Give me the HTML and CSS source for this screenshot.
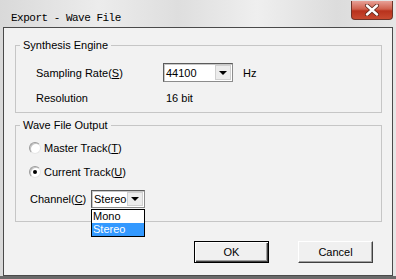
FILE: index.html
```html
<!DOCTYPE html>
<html>
<head lang="en">
    <meta charset="UTF-8">
    <title>Export - Wave File</title>
    <link rel="stylesheet" href="styles.css">
</head>
<body>
<div class="window">
    <div class="titlebar">
        <span class="title">Export - Wave File</span>
        <span class="close">
            <svg width="16" height="12" viewBox="0 0 16 12">
                <path d="M3 1.5 L13 10.5 M13 1.5 L3 10.5" stroke="#5a2418" stroke-width="4" stroke-linecap="round" fill="none"/>
                <path d="M3 1.5 L13 10.5 M13 1.5 L3 10.5" stroke="#fff" stroke-width="2.4" stroke-linecap="round" fill="none"/>
            </svg>
        </span>
    </div>
    <div class="client">
        <fieldset class="group">
            <legend>Synthesis Engine</legend>
            <div class="group-body engine">
                <div class="row">
                    <span class="label">Sampling Rate(<u>S</u>)</span>
                    <div class="combo rate">
                        <span class="value">44100</span>
                        <span class="drop"><i></i></span>
                    </div>
                    <span class="unit">Hz</span>
                </div>
                <div class="row second">
                    <span class="label">Resolution</span>
                    <span class="plain">16 bit</span>
                </div>
            </div>
        </fieldset>
        <fieldset class="group output">
            <legend>Wave File Output</legend>
            <div class="group-body">
                <div class="radio"><span class="dot"></span>Master Track(<u>T</u>)</div>
                <div class="radio checked"><span class="dot"></span>Current Track(<u>U</u>)</div>
                <div class="row channel">
                    <span class="label">Channel(<u>C</u>)</span>
                    <div class="combo stereo">
                        <span class="value">Stereo</span>
                        <span class="drop"><i></i></span>
                        <div class="list">
                            <div class="item">Mono</div>
                            <div class="item selected">Stereo</div>
                        </div>
                    </div>
                </div>
            </div>
        </fieldset>
        <div class="buttons">
            <div class="btn default">OK</div>
            <div class="btn">Cancel</div>
        </div>
    </div>
</div>
</body>
</html>
```

FILE: styles.css
```css
*{
    padding: 0;
    margin: 0;
    box-sizing: border-box;
}
body{
    background: #7a7a7a;
    font-family: "Liberation Sans", Arial, sans-serif;
    font-size: 11px;
    color: #000;
}
.window{
    width: 396px;
    height: 279px;
    display: flex;
    flex-direction: column;
    padding: 0 3px;
    background: linear-gradient(90deg, #d9d9d9, #ececec 25%, #dedede 45%, #efefef 65%, #dcdcdc 85%, #e6e6e6);
    border-bottom: 3px solid #6a6a6a;
}
.titlebar{
    height: 27px;
    display: flex;
    justify-content: space-between;
    align-items: flex-start;
}
.title{
    font-family: "Liberation Mono", "Courier New", monospace;
    font-size: 11px;
    letter-spacing: -0.5px;
    color: #000;
    padding: 12px 0 0 8px;
    line-height: 12px;
}
.close{
    width: 42px;
    height: 19px;
    margin-top: 1px;
    display: flex;
    align-items: center;
    justify-content: center;
    border: 1px solid #6e3328;
    border-top: none;
    border-radius: 0 0 4px 4px;
    background: linear-gradient(#e7a096, #d0604c 45%, #b8321d 55%, #c84a30);
}
.client{
    flex: 1;
    background: #f2f2f2;
    border: 1px solid #4a4a4a;
}
.group{
    border: 1px solid #c6c6c6;
    margin: 11px 10px 0 11px;
    min-inline-size: 0;
}
.group.output{
    margin-top: 6px;
}
.group legend{
    margin-left: 4px;
    padding: 0 3px;
    line-height: 12px;
}
.group-body{
    padding: 10px 0 13px 13px;
}
.group-body.engine{
    padding: 12px 0 7px 20px;
}
.row{
    display: flex;
    align-items: center;
}
.row.second{
    margin-top: 10px;
    line-height: 13px;
}
.engine .label{
    width: 127px;
}
.plain{
    padding-left: 3px;
}
.unit{
    margin-left: 10px;
}
.combo{
    position: relative;
    height: 19px;
    display: flex;
    align-items: center;
    background: #fff;
    border: 1px solid #8c8c8c;
    border-top-color: #5c5c5c;
    border-left-color: #5c5c5c;
    box-shadow: inset 1px 1px 0 #c8c8c8;
}
.combo.rate{
    width: 70px;
}
.combo .value{
    flex: 1;
    padding-left: 2px;
}
.drop{
    width: 16px;
    height: 15px;
    margin-right: 1px;
    background: #ececec;
    border: 1px solid #d0d0d0;
    display: flex;
    align-items: center;
    justify-content: center;
}
.drop i{
    border-left: 4px solid transparent;
    border-right: 4px solid transparent;
    border-top: 4px solid #000;
}
.radio{
    display: flex;
    align-items: center;
    height: 14px;
}
.radio + .radio{
    margin-top: 10px;
}
.dot{
    width: 12px;
    height: 12px;
    border-radius: 50%;
    margin-right: 3px;
    background: #fff;
    border: 1px solid;
    border-color: #9a9a9a #e6e6e6 #e6e6e6 #9a9a9a;
    box-shadow: inset 1px 1px 0 #c4c4c4;
    display: flex;
    align-items: center;
    justify-content: center;
}
.checked .dot::after{
    content: "";
    width: 4px;
    height: 4px;
    border-radius: 50%;
    background: #000;
}
.row.channel{
    margin-top: 11px;
    padding-left: 1px;
}
.channel .label{
    width: 61px;
}
.combo.stereo{
    width: 54px;
    height: 18px;
}
.combo.stereo .drop{
    height: 14px;
}
.list{
    position: absolute;
    left: -1px;
    top: 18px;
    width: 54px;
    background: #fff;
    border: 1px solid #000;
    line-height: 13px;
}
.item{
    padding-left: 1px;
}
.item.selected{
    background: #3399ff;
    color: #fff;
}
.buttons{
    display: flex;
    justify-content: flex-end;
    gap: 29px;
    margin-top: 19px;
    padding-right: 19px;
}
.btn{
    width: 75px;
    height: 22px;
    display: flex;
    align-items: center;
    justify-content: center;
    background: #f0f0f0;
    border: 1px solid;
    border-color: #fff #404040 #404040 #fff;
    box-shadow: inset -1px -1px 0 #a0a0a0;
}
.btn.default{
    border: 1px solid #000;
    box-shadow: inset 1px 1px 0 #fff, inset -1px -1px 0 #404040, inset -2px -2px 0 #a0a0a0;
}
```
